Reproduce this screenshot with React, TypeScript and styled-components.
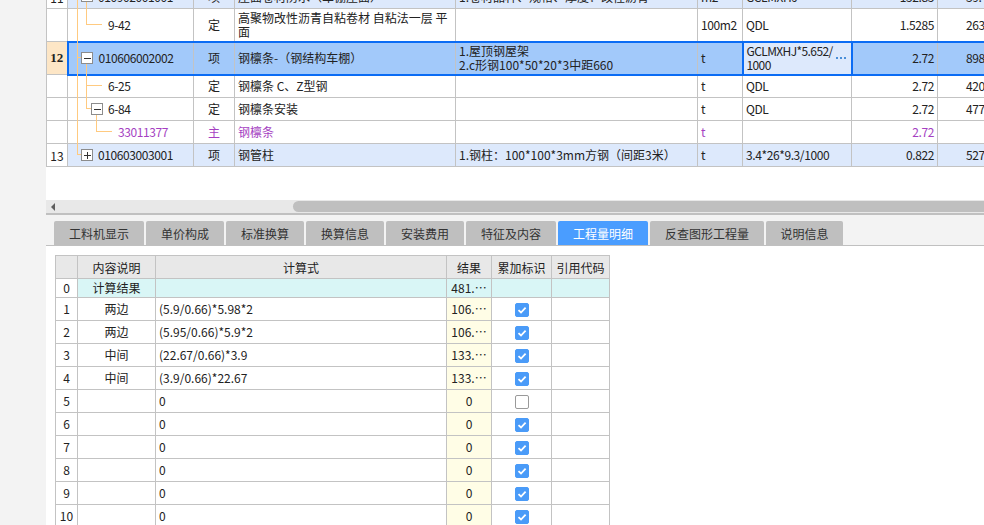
import React from 'react';
import styled, { createGlobalStyle, css } from 'styled-components';

const GlobalStyle = createGlobalStyle`
  html, body { margin: 0; padding: 0; background: #fff; }
  body {
    font-family: "Noto Sans CJK SC", "Liberation Sans", sans-serif;
    font-size: 12px;
    color: #222;
  }
`;

const c = {
  grid: '#c3c3c3',
  rowBlue: '#dde9fc',
  selBlue: '#a2c9fa',
  selBorder: '#0b6cf4',
  peach: '#fde6c6',
  tree: '#ffca80',
  purple: '#a53fc2',
  tabIdle: '#bfbfbf',
  tabActive: '#4a9dff',
  panel: '#f3f3f3',
};

const Page = styled.div`
  width: 984px;
  height: 525px;
  display: flex;
  overflow: hidden;
`;

const Gutter = styled.div`
  width: 46px;
  flex: none;
  background: ${c.panel};
`;

const Main = styled.div`
  flex: 1;
  min-width: 0;
  display: flex;
  flex-direction: column;
`;

/* ---------- upper grid ---------- */

const GridViewport = styled.div`
  height: 200px;
  flex: none;
  position: relative;
  overflow: hidden;
  background: #fff;
`;

const GridTable = styled.table`
  border-collapse: collapse;
  table-layout: fixed;
  width: 971px;
  margin-top: -15px;
`;

type RowKind = 'plain' | 'item' | 'selected';

const Row = styled.tr<{ $h: number }>`
  height: ${p => p.$h}px;
`;

const Cell = styled.td<{
  $kind?: RowKind;
  $align?: 'left' | 'center' | 'right';
  $purple?: boolean;
  $pad?: number;
  $edit?: boolean;
  $first?: boolean;
  $wrap?: boolean;
  $ascii?: boolean;
}>`
  border: 1px solid ${c.grid};
  padding: 0 3px 0 ${p => (p.$pad ?? 3)}px;
  text-align: ${p => p.$align ?? 'left'};
  color: ${p => (p.$purple ? c.purple : '#222')};
  white-space: ${p => (p.$wrap ? 'normal' : 'nowrap')};
  letter-spacing: ${p => (p.$ascii ? '-0.4px' : '0')};
  overflow: hidden;
  line-height: 14px;
  vertical-align: middle;
  background: ${p =>
    p.$kind === 'item' ? c.rowBlue : p.$kind === 'selected' ? c.selBlue : '#fff'};
  ${p =>
    p.$kind === 'selected' &&
    css`
      border-top: 2px solid ${c.selBorder};
      border-bottom: 2px solid ${c.selBorder};
    `}
  ${p =>
    p.$first &&
    css`
      border-left: 2px solid ${c.selBorder};
    `}
  ${p =>
    p.$edit &&
    css`
      border: 2px solid ${c.selBorder};
      background: ${c.rowBlue};
      padding-right: 1px;
    `}
`;

const NumCell = styled.td<{ $active?: boolean }>`
  border: 1px solid ${c.grid};
  padding: 0;
  text-align: center;
  background: ${p => (p.$active ? c.peach : '#fff')};
  font-family: ${p => (p.$active ? '"Liberation Serif", serif' : 'inherit')};
  font-weight: ${p => (p.$active ? 700 : 400)};
  font-size: ${p => (p.$active ? '13px' : '12px')};
`;

const EditBox = styled.div`
  display: flex;
  align-items: center;
  justify-content: space-between;
  letter-spacing: -0.6px;
`;

const EditDots = styled.span`
  display: flex;
  gap: 2px;
  padding-right: 4px;
`;

const Dot = styled.span`
  width: 2px;
  height: 2px;
  background: #4a8fd8;
`;

const TreeLayer = styled.svg`
  position: absolute;
  left: 0;
  top: 0;
  pointer-events: none;
`;

type TopRow = {
  no: string;
  h: number;
  kind: RowKind;
  code: string;
  indent: number;
  type: string;
  name: React.ReactNode;
  feature: React.ReactNode;
  unit: string;
  expr: React.ReactNode;
  qty: string;
  price: string;
  purple?: boolean;
};

const topRows: TopRow[] = [
  {
    no: '11', h: 23, kind: 'item', code: '010902001001', indent: 30, type: '项',
    name: '屋面卷材防水（车棚屋面）', feature: '1.卷材品种、规格、厚度：改性沥青', unit: 'm2', expr: 'GCLMXHJ', qty: '152.85', price: '39.41',
  },
  {
    no: '', h: 33, kind: 'plain', code: '9-42', indent: 40, type: '定',
    name: '高聚物改性沥青自粘卷材 自粘法一层 平面', feature: '', unit: '100m2', expr: 'QDL', qty: '1.5285', price: '2631.47',
  },
  {
    no: '12', h: 33, kind: 'selected', code: '010606002002', indent: 30, type: '项',
    name: '钢檩条-（钢结构车棚）',
    feature: (
      <>
        1.屋顶钢屋架<br />2.c形钢100*50*20*3中距660
      </>
    ),
    unit: 't',
    expr: (
      <EditBox>
        <span>
          GCLMXHJ*5.652/<br />1000
        </span>
        <EditDots>
          <Dot />
          <Dot />
          <Dot />
        </EditDots>
      </EditBox>
    ),
    qty: '2.72', price: '8980.16',
  },
  {
    no: '', h: 23, kind: 'plain', code: '6-25', indent: 40, type: '定',
    name: '钢檩条 C、Z型钢', feature: '', unit: 't', expr: 'QDL', qty: '2.72', price: '4206.35',
  },
  {
    no: '', h: 23, kind: 'plain', code: '6-84', indent: 40, type: '定',
    name: '钢檩条安装', feature: '', unit: 't', expr: 'QDL', qty: '2.72', price: '4773.81',
  },
  {
    no: '', h: 23, kind: 'plain', code: '33011377', indent: 50, type: '主',
    name: '钢檩条', feature: '', unit: 't', expr: '', qty: '2.72', price: '', purple: true,
  },
  {
    no: '13', h: 23, kind: 'item', code: '010603003001', indent: 30, type: '项',
    name: '钢管柱', feature: '1.钢柱：100*100*3mm方钢（间距3米）', unit: 't', expr: '3.4*26*9.3/1000', qty: '0.822', price: '5274.60',
  },
];

const ToggleBox: React.FC<{ x: number; y: number; open: boolean }> = ({ x, y, open }) => (
  <g>
    <rect x={x + 0.5} y={y + 0.5} width={11} height={11} fill="#fff" stroke="#8c8c8c" />
    <line x1={x + 3} y1={y + 6.5} x2={x + 10} y2={y + 6.5} stroke="#333" />
    {!open && <line x1={x + 6.5} y1={y + 3} x2={x + 6.5} y2={y + 10} stroke="#333" />}
  </g>
);

const TreeLines: React.FC = () => (
  <TreeLayer width={200} height={200} viewBox="46 0 200 200">
    <g stroke={c.tree} strokeWidth={1} fill="none">
      <line x1={77.5} y1={0} x2={77.5} y2={154.5} />
      <line x1={77} y1={154.5} x2={81} y2={154.5} />
      <line x1={77} y1={57.5} x2={81} y2={57.5} />
      <line x1={86.5} y1={1} x2={86.5} y2={24.5} />
      <line x1={86} y1={24.5} x2={102} y2={24.5} />
      <line x1={86.5} y1={63} x2={86.5} y2={108.5} />
      <line x1={86} y1={85.5} x2={102} y2={85.5} />
      <line x1={86} y1={108.5} x2={91} y2={108.5} />
      <line x1={96.5} y1={114} x2={96.5} y2={131.5} />
      <line x1={96} y1={131.5} x2={112} y2={131.5} />
    </g>
    <ToggleBox x={81} y={-10} open />
    <ToggleBox x={81} y={52} open />
    <ToggleBox x={91} y={103} open />
    <ToggleBox x={81} y={149} open={false} />
  </TreeLayer>
);

const UpperGrid: React.FC = () => (
  <GridViewport>
    <GridTable>
      <colgroup>
        {[21, 126, 41, 221, 242, 45, 109, 86, 80].map((w, i) => (
          <col key={i} style={{ width: w }} />
        ))}
      </colgroup>
      <tbody>
        {topRows.map((r, i) => {
          const k = r.kind;
          return (
            <Row key={i} $h={r.h}>
              <NumCell $active={k === 'selected'}>{r.no}</NumCell>
              <Cell $kind={k} $pad={r.indent} $purple={r.purple} $first={k === 'selected'} $ascii>
                {r.code}
              </Cell>
              <Cell $kind={k} $align="center" $purple={r.purple}>{r.type}</Cell>
              <Cell $kind={k} $purple={r.purple} $wrap>{r.name}</Cell>
              <Cell $kind={k}>{r.feature}</Cell>
              <Cell $kind={k} $purple={r.purple} $ascii>{r.unit}</Cell>
              <Cell $kind={k} $edit={k === 'selected'} $ascii>{r.expr}</Cell>
              <Cell $kind={k} $align="right" $purple={r.purple} $ascii>{r.qty}</Cell>
              <Cell $kind={k} $pad={28} $ascii>{r.price}</Cell>
            </Row>
          );
        })}
      </tbody>
    </GridTable>
    <TreeLines />
  </GridViewport>
);

/* ---------- scrollbar ---------- */

const HScroll = styled.div`
  height: 13px;
  flex: none;
  display: flex;
  align-items: center;
  padding-left: 5px;
  background: #e8e8e8;
  border-bottom: 2px solid #c0c0c0;
`;

const ScrollArrow = styled.span`
  width: 0;
  height: 0;
  border-top: 4px solid transparent;
  border-bottom: 4px solid transparent;
  border-right: 4px solid #5e5e5e;
`;

const ScrollThumb = styled.span`
  flex: 1;
  height: 11px;
  margin-left: 238px;
  background: #bfbfbf;
  border-radius: 6px 0 0 6px;
`;

/* ---------- tabs ---------- */

const TabBar = styled.div`
  height: 31px;
  flex: none;
  box-sizing: border-box;
  display: flex;
  align-items: flex-end;
  gap: 2px;
  padding-left: 8px;
  background: ${c.panel};
  border-bottom: 1px solid #c0c0c0;
`;

const Tab = styled.div<{ $w: number; $active?: boolean }>`
  width: ${p => p.$w}px;
  height: 24px;
  display: flex;
  align-items: center;
  justify-content: center;
  border-radius: 2px 2px 0 0;
  font-size: 12px;
  background: ${p => (p.$active ? c.tabActive : c.tabIdle)};
  color: ${p => (p.$active ? '#fff' : '#333')};
`;

const tabs = [
  { t: '工料机显示', w: 90 },
  { t: '单价构成', w: 78 },
  { t: '标准换算', w: 78 },
  { t: '换算信息', w: 78 },
  { t: '安装费用', w: 78 },
  { t: '特征及内容', w: 90 },
  { t: '工程量明细', w: 90, active: true },
  { t: '反查图形工程量', w: 114 },
  { t: '说明信息', w: 77 },
];

/* ---------- detail table ---------- */

const DetailPanel = styled.div`
  flex: 1;
  background: #fff;
  padding: 9px 0 0 9px;
  overflow: hidden;
`;

const DetailTable = styled.table`
  border-collapse: collapse;
  table-layout: fixed;
  width: 554px;
`;

const DRow = styled.tr<{ $h: number }>`
  height: ${p => p.$h}px;
`;

const HeadCell = styled.th`
  border: 1px solid ${c.grid};
  background: #e8e8e8;
  font-weight: 400;
  font-size: 12px;
  color: #222;
  padding: 0;
  text-align: center;
`;

type Tone = 'white' | 'cyan' | 'yellow';

const DCell = styled.td<{ $tone?: Tone; $align?: 'left' | 'center' }>`
  border: 1px solid ${c.grid};
  padding: 0 3px;
  white-space: nowrap;
  overflow: hidden;
  line-height: 16px;
  text-align: ${p => p.$align ?? 'center'};
  background: ${p =>
    p.$tone === 'cyan' ? '#d9f6f6' : p.$tone === 'yellow' ? '#fffde6' : '#fff'};
`;

const CheckBox = styled.span<{ $on: boolean }>`
  display: inline-flex;
  align-items: center;
  justify-content: center;
  width: 14px;
  height: 14px;
  box-sizing: border-box;
  border-radius: 2px;
  vertical-align: middle;
  background: ${p => (p.$on ? '#4a9bf8' : '#fff')};
  border: 1px solid ${p => (p.$on ? '#4a9bf8' : '#9a9a9a')};
`;

const Check: React.FC<{ on: boolean }> = ({ on }) => (
  <CheckBox $on={on}>
    {on && (
      <svg width="10" height="10" viewBox="0 0 10 10">
        <path d="M1.5 5.2 L4 7.5 L8.6 2.6" stroke="#fff" strokeWidth="1.8" fill="none" />
      </svg>
    )}
  </CheckBox>
);

const detailRows = [
  { d: '两边', f: '(5.9/0.66)*5.98*2', r: '106.⋯', on: true },
  { d: '两边', f: '(5.95/0.66)*5.9*2', r: '106.⋯', on: true },
  { d: '中间', f: '(22.67/0.66)*3.9', r: '133.⋯', on: true },
  { d: '中间', f: '(3.9/0.66)*22.67', r: '133.⋯', on: true },
  { d: '', f: '0', r: '0', on: false },
  { d: '', f: '0', r: '0', on: true },
  { d: '', f: '0', r: '0', on: true },
  { d: '', f: '0', r: '0', on: true },
  { d: '', f: '0', r: '0', on: true },
  { d: '', f: '0', r: '0', on: true },
];

const DetailGrid: React.FC = () => (
  <DetailTable>
    <colgroup>
      {[22, 78, 291, 45, 60, 58].map((w, i) => (
        <col key={i} style={{ width: w }} />
      ))}
    </colgroup>
    <thead>
      <DRow $h={23}>
        <HeadCell />
        <HeadCell>内容说明</HeadCell>
        <HeadCell>计算式</HeadCell>
        <HeadCell>结果</HeadCell>
        <HeadCell>累加标识</HeadCell>
        <HeadCell>引用代码</HeadCell>
      </DRow>
    </thead>
    <tbody>
      <DRow $h={19}>
        <DCell>0</DCell>
        <DCell $tone="cyan">计算结果</DCell>
        <DCell $tone="cyan" />
        <DCell $tone="cyan">481.⋯</DCell>
        <DCell $tone="cyan" />
        <DCell $tone="cyan" />
      </DRow>
      {detailRows.map((r, i) => (
        <DRow key={i} $h={23}>
          <DCell>{i + 1}</DCell>
          <DCell>{r.d}</DCell>
          <DCell $align="left">{r.f}</DCell>
          <DCell $tone="yellow">{r.r}</DCell>
          <DCell>
            <Check on={r.on} />
          </DCell>
          <DCell />
        </DRow>
      ))}
    </tbody>
  </DetailTable>
);

const App: React.FC = () => (
  <>
    <GlobalStyle />
    <Page>
      <Gutter />
      <Main>
        <UpperGrid />
        <HScroll>
          <ScrollArrow />
          <ScrollThumb />
        </HScroll>
        <TabBar>
          {tabs.map(t => (
            <Tab key={t.t} $w={t.w} $active={t.active}>
              {t.t}
            </Tab>
          ))}
        </TabBar>
        <DetailPanel>
          <DetailGrid />
        </DetailPanel>
      </Main>
    </Page>
  </>
);

export default App;
